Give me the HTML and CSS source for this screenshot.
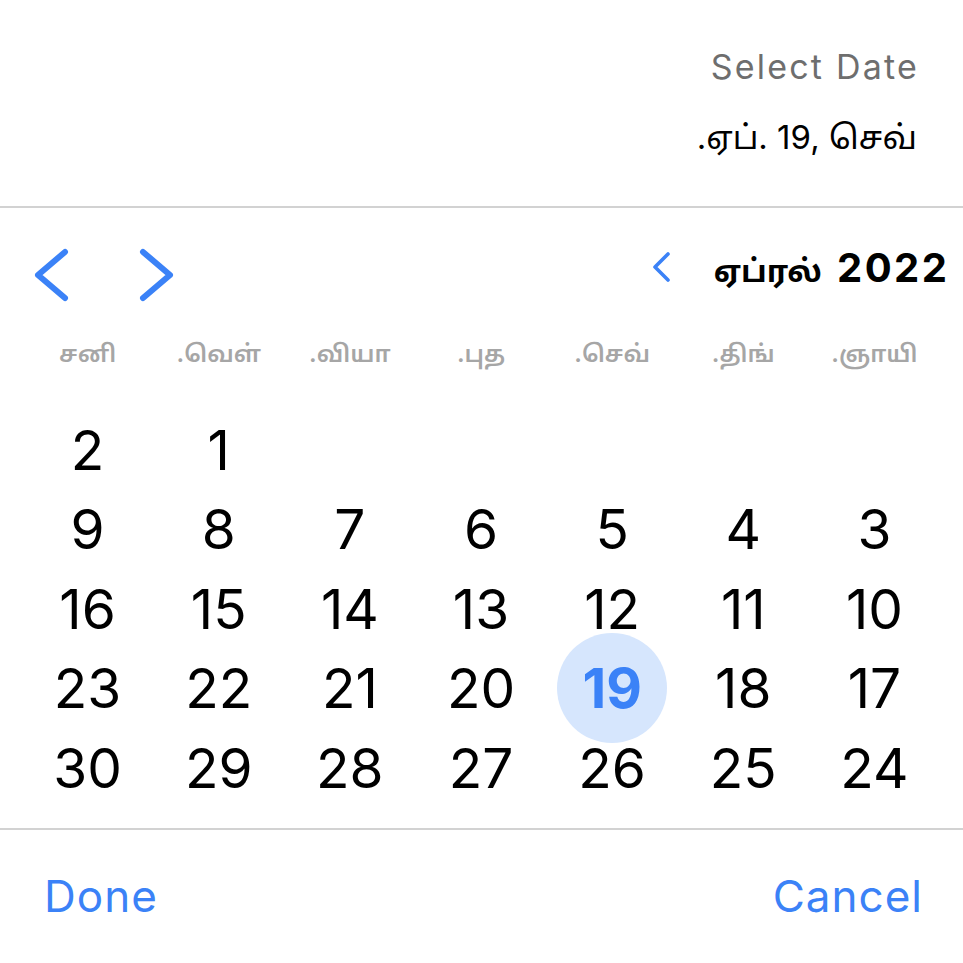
FILE: index.html
```html
<!DOCTYPE html>
<html lang="ta">
<head>
<meta charset="utf-8">
<title>Select Date</title>
<link rel="stylesheet" href="styles.css">
</head>
<body>
<div class="sheet">
  <header class="head">
    <div class="title">Select Date</div>
    <div class="subtitle">.ஏப். 19, செவ்</div>
  </header>
  <nav class="nav">
    <div class="arrows">
      <svg class="arrow" width="40" height="56" viewBox="0 0 40 56"><path d="M33 5 L6 28 L33 51" /></svg>
      <svg class="arrow" width="40" height="56" viewBox="0 0 40 56"><path d="M7 5 L34 28 L7 51" /></svg>
    </div>
    <div class="month">
      <svg class="small-arrow" width="24" height="34" viewBox="0 0 24 34"><path d="M18 4 L5 17 L18 30" /></svg>
      <span class="month-text"><span class="month-name">ஏப்ரல்</span><span class="year">2022</span></span>
    </div>
  </nav>
  <div class="weekdays">
    <span>.ஞாயி</span><span>.திங்</span><span>.செவ்</span><span>.புத</span><span>.வியா</span><span>.வெள்</span><span>சனி</span>
  </div>
  <div class="days">
    <span></span><span></span><span></span><span></span><span></span><span>1</span><span>2</span>
    <span>3</span><span>4</span><span>5</span><span>6</span><span>7</span><span>8</span><span>9</span>
    <span>10</span><span>11</span><span>12</span><span>13</span><span>14</span><span>15</span><span>16</span>
    <span>17</span><span>18</span><span class="sel"><b>19</b></span><span>20</span><span>21</span><span>22</span><span>23</span>
    <span>24</span><span>25</span><span>26</span><span>27</span><span>28</span><span>29</span><span>30</span>
  </div>
  <footer class="foot">
    <span class="btn">Done</span>
    <span class="btn">Cancel</span>
  </footer>
</div>
</body>
</html>
```

FILE: styles.css
```css
html, body {
  margin: 0;
  padding: 0;
  background: #ffffff;
}
body {
  font-family: Inter, "Noto Sans Tamil", "Lohit Tamil", "Noto Sans", sans-serif;
  color: #000;
}
.sheet {
  width: 963px;
  height: 963px;
  display: flex;
  flex-direction: column;
}
.head {
  height: 206px;
  border-bottom: 2px solid #d2d2d2;
  padding-right: 46px;
  display: flex;
  flex-direction: column;
  align-items: flex-end;
  box-sizing: content-box;
}
.title {
  margin-top: 44px;
  margin-right: -2px;
  height: 46px;
  line-height: 46px;
  font-size: 34px;
  color: #6e6e6e;
  letter-spacing: 2.2px;
}
.subtitle {
  margin-top: 24px;
  height: 46px;
  line-height: 46px;
  font-size: 33px;
  color: #000;
}
.nav {
  margin-top: 32px;
  height: 70px;
  display: flex;
  justify-content: space-between;
  align-items: center;
  padding: 0 16px 0 32px;
}
.arrows {
  display: flex;
  gap: 64px;
}
.arrow path, .small-arrow path {
  fill: none;
  stroke: #3b82f7;
  stroke-linecap: round;
  stroke-linejoin: round;
}
.arrow path { stroke-width: 6; }
.small-arrow path { stroke-width: 3.6; }
.month {
  display: flex;
  align-items: center;
  gap: 40px;
}
.small-arrow { margin-top: -16px; }
.month-text {
  font-weight: 700;
  margin-top: -14px;
  white-space: nowrap;
  display: flex;
  align-items: baseline;
}
.month-name {
  font-size: 31px;
}
.year {
  font-size: 40px;
  letter-spacing: 2.5px;
  margin-right: -2.5px;
  margin-left: 15px;
}
.weekdays {
  margin: 25px 0 0 22px;
  width: 918px;
  height: 40px;
  display: grid;
  grid-template-columns: repeat(7, 1fr);
  align-items: center;
  justify-items: center;
  direction: rtl;
  font-size: 24px;
  color: #a6a6a6;
  font-weight: 600;
}
.weekdays span {
  direction: ltr;
}
.days {
  margin: 35px 0 0 22px;
  width: 918px;
  display: grid;
  grid-template-columns: repeat(7, 1fr);
  grid-auto-rows: 79.5px;
  direction: rtl;
  font-size: 55px;
  font-weight: 400;
}
.days span {
  display: flex;
  align-items: center;
  justify-content: center;
  direction: ltr;
}
.days .sel b {
  width: 110px;
  height: 110px;
  border-radius: 50%;
  background: #d6e6fd;
  color: #3b82f7;
  font-weight: 700;
  display: flex;
  align-items: center;
  justify-content: center;
  flex: none;
}
.foot {
  margin-top: 20px;
  border-top: 2px solid #d2d2d2;
  flex: 1;
  display: flex;
  justify-content: space-between;
  align-items: center;
  padding: 0 40px 0 44px;
}
.btn {
  font-size: 44px;
  color: #3b82f7;
  letter-spacing: 1px;
}
```
